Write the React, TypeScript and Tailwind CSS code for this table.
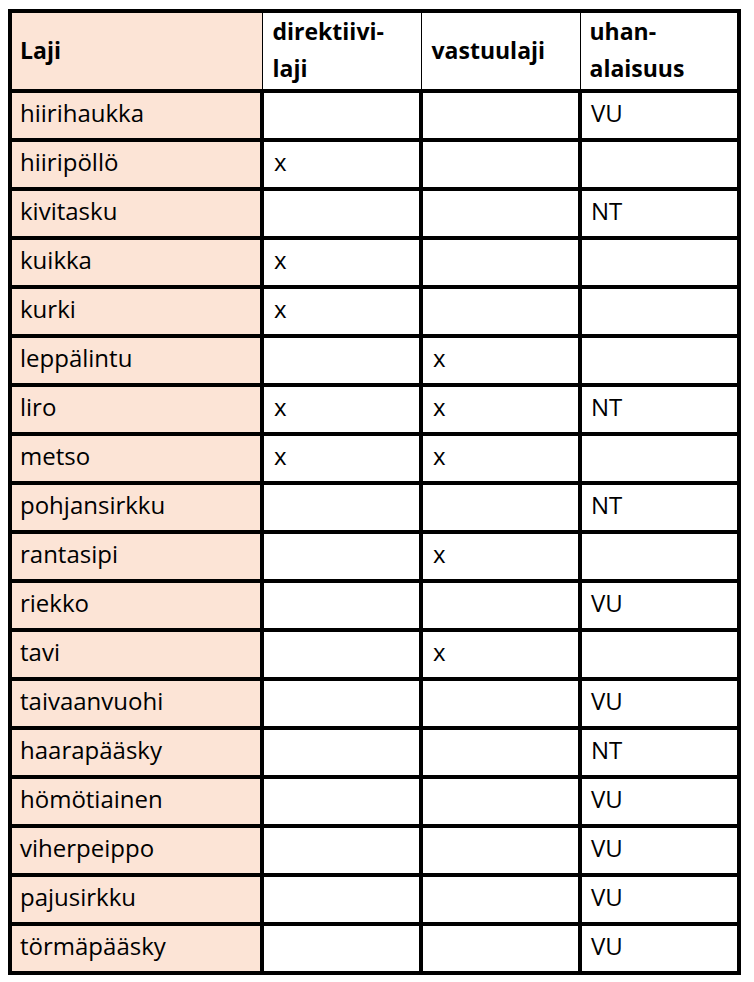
const rows: [string, string, string, string][] = [
  ['hiirihaukka', '', '', 'VU'],
  ['hiiripöllö', 'x', '', ''],
  ['kivitasku', '', '', 'NT'],
  ['kuikka', 'x', '', ''],
  ['kurki', 'x', '', ''],
  ['leppälintu', '', 'x', ''],
  ['liro', 'x', 'x', 'NT'],
  ['metso', 'x', 'x', ''],
  ['pohjansirkku', '', '', 'NT'],
  ['rantasipi', '', 'x', ''],
  ['riekko', '', '', 'VU'],
  ['tavi', '', 'x', ''],
  ['taivaanvuohi', '', '', 'VU'],
  ['haarapääsky', '', '', 'NT'],
  ['hömötiainen', '', '', 'VU'],
  ['viherpeippo', '', '', 'VU'],
  ['pajusirkku', '', '', 'VU'],
  ['törmäpääsky', '', '', 'VU'],
]

export default function App() {
  return (
    <div className="min-h-screen bg-white pt-[9px] pl-[8px] text-black" style={{ fontFamily: '"Open Sans", "Noto Sans", sans-serif' }}>
      <table className="table-fixed border-collapse w-[729px] text-[24px]">
        <colgroup>
          <col className="w-[252px]" />
          <col className="w-[159px]" />
          <col className="w-[159px]" />
          <col className="w-[159px]" />
        </colgroup>
        <thead>
          {/* header: thin verticals, thick outer/bottom */}
          <tr className="h-[78px] font-bold text-[23px] leading-[37px]">
            <th className="bg-[#fce4d6] border-4 border-r border-black text-left align-middle pl-[8px] pb-[2px]">Laji</th>
            <th className="border-y-4 border-x border-black text-left align-middle pl-[10px] pb-[2px]">
              direktiivi-
              <br />
              laji
            </th>
            <th className="border-y-4 border-x border-black text-left align-middle pl-[10px] pb-[2px]">vastuulaji</th>
            <th className="border-4 border-l border-black text-left align-middle pl-[9px] pb-[2px]">
              uhan-
              <br />
              alaisuus
            </th>
          </tr>
        </thead>
        <tbody>
          {rows.map((r) => (
            <tr key={r[0]} className="h-[49px]">
              <td className="bg-[#fce4d6] border-4 border-black pl-[8px] pb-[6px] align-middle">{r[0]}</td>
              <td className="border-4 border-black pl-[10px] pb-[6px] align-middle">{r[1]}</td>
              <td className="border-4 border-black pl-[10px] pb-[6px] align-middle">{r[2]}</td>
              <td className="border-4 border-black pl-[9px] pb-[6px] align-middle">{r[3]}</td>
            </tr>
          ))}
        </tbody>
      </table>
    </div>
  )
}
